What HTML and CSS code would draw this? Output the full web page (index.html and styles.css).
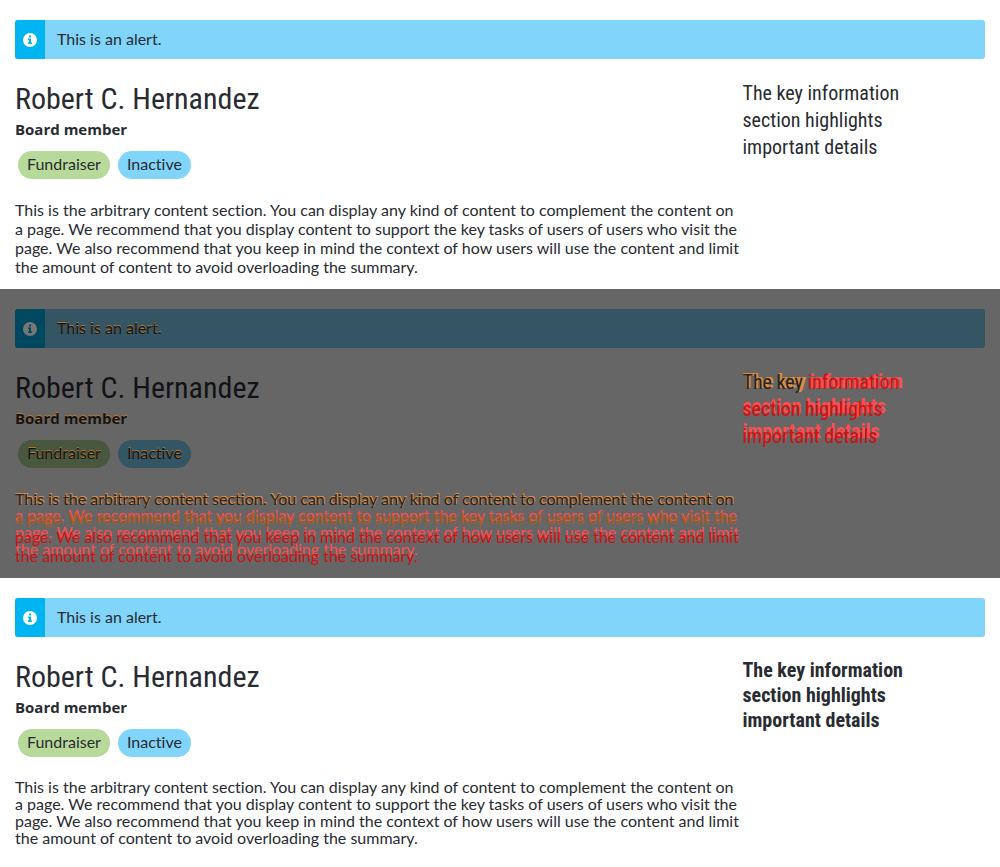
FILE: index.html
```html
<!DOCTYPE html>
<html lang="en">
<head>
<meta charset="utf-8">
<title>Summary comparison</title>
<link rel="stylesheet" href="styles.css">
</head>
<body>
<main>
  <section class="panel">
    <div class="alert" role="alert">
      <span class="alert-icon"><svg viewBox="0 0 14 14" width="14" height="14" aria-hidden="true"><circle cx="7" cy="7" r="7" fill="#fff"/><path d="M6 2.500h2v2H6zM5 5.500h3v4h1V11H5V9.500h1V7H5z" fill="#00b4f1"/></svg></span>
      <p class="alert-text">This is an alert.</p>
    </div>
    <div class="summary">
      <div class="details">
        <h1 class="name">Robert C. Hernandez</h1>
        <p class="role">Board member</p>
        <div class="labels"><span class="label label-green">Fundraiser</span><span class="label label-blue">Inactive</span></div>
        <p class="content">This is the arbitrary content section. You can display any kind of content to complement the content on<br>a page. We recommend that you display content to support the key tasks of users of users who visit the<br>page. We also recommend that you keep in mind the context of how users will use the content and limit<br>the amount of content to avoid overloading the summary.</p>
      </div>
      <aside class="key"><p class="key-text">The key information<br>section highlights<br>important details</p></aside>
    </div>
  </section>

  <section class="panel diff">
    <div class="alert" role="alert">
      <span class="alert-icon"><svg viewBox="0 0 14 14" width="14" height="14" aria-hidden="true"><circle cx="7" cy="7" r="7" fill="#777"/><path d="M6 2.500h2v2H6zM5 5.500h3v4h1V11H5V9.500h1V7H5z" fill="#004860"/></svg></span>
      <p class="alert-text edge">This is an alert.</p>
    </div>
    <div class="summary">
      <div class="details">
        <h1 class="name">Robert C. Hernandez</h1>
        <p class="role edge">Board member</p>
        <div class="labels"><span class="label label-green edge">Fundraiser</span><span class="label label-blue edge">Inactive</span></div>
        <div class="stack">
          <p class="content before"><span class="kept">This is the arbitrary content section. You can display any kind of content to complement the content on</span><br><span class="moved">a page. We recommend that you display content to support the key tasks of users of users who visit the</span><br>page. We also recommend that you keep in mind the context of how users will use the content and limit<br>the amount of content to avoid overloading the summary.</p>
          <p class="content compact after" aria-hidden="true"><span class="kept">This is the arbitrary content section. You can display any kind of content to complement the content on</span><br>a page. We recommend that you display content to support the key tasks of users of users who visit the<br>page. We also recommend that you keep in mind the context of how users will use the content and limit<br>the amount of content to avoid overloading the summary.</p>
        </div>
      </div>
      <aside class="key">
        <div class="stack">
          <p class="key-text before"><span class="kept">The key</span> information<br>section highlights<br>important details</p>
          <p class="key-text strong after" aria-hidden="true"><span class="kept">The key</span> information<br>section highlights<br>important details</p>
        </div>
      </aside>
    </div>
  </section>

  <section class="panel">
    <div class="alert" role="alert">
      <span class="alert-icon"><svg viewBox="0 0 14 14" width="14" height="14" aria-hidden="true"><circle cx="7" cy="7" r="7" fill="#fff"/><path d="M6 2.500h2v2H6zM5 5.500h3v4h1V11H5V9.500h1V7H5z" fill="#00b4f1"/></svg></span>
      <p class="alert-text">This is an alert.</p>
    </div>
    <div class="summary">
      <div class="details">
        <h1 class="name">Robert C. Hernandez</h1>
        <p class="role">Board member</p>
        <div class="labels"><span class="label label-green">Fundraiser</span><span class="label label-blue">Inactive</span></div>
        <p class="content compact">This is the arbitrary content section. You can display any kind of content to complement the content on<br>a page. We recommend that you display content to support the key tasks of users of users who visit the<br>page. We also recommend that you keep in mind the context of how users will use the content and limit<br>the amount of content to avoid overloading the summary.</p>
      </div>
      <aside class="key"><p class="key-text strong">The key information<br>section highlights<br>important details</p></aside>
    </div>
  </section>
</main>
</body>
</html>
```
FILE: styles.css
```css
* { box-sizing: border-box; }
body { margin: 0; background: #fff; color: #282b31; font: 16px/19px Lato, sans-serif; font-variant-ligatures: none; }
h1, p { margin: 0; }
.panel { padding: 20px 15px 11px; min-height: 289px; }
.alert { display: flex; min-height: 39px; background: #81d4fa; border-radius: 3px; overflow: hidden; }
.alert-icon { display: flex; align-items: center; justify-content: center; width: 30px; background: #00b4f1; }
.alert-icon svg { display: block; }
.alert-text { padding: 9px 12px 11px; }
.summary { display: grid; grid-template-columns: 3fr 1fr; padding-top: 21px; }
.details { min-width: 0; }
.name { font: 400 30px/38px "Roboto Condensed", Roboto, sans-serif; }
.role { font: 700 15px/20px "Open Sans", sans-serif; padding-top: 1px; }
.labels { display: flex; gap: 8px; padding: 12px 3px 21px; }
.label { padding: 3px 9px 6px; border-radius: 14px; }
.label-green { background: #b7da9b; }
.label-blue { background: #81d4fa; }
.content { white-space: nowrap; }
.compact { line-height: 17px; }
.key-text { font: 400 20px/27px "Roboto Condensed", Roboto, sans-serif; white-space: nowrap; }
.key-text.strong { font-weight: 700; line-height: 25px; }
.diff { background: #666; color: #111316; }
.diff .alert, .diff .label-blue { background: #335564; }
.diff .alert-icon { background: #004860; }
.diff .label-green { background: #49573e; }
.edge { text-shadow: 0 -1px #b87428; }
.stack { display: grid; }
.stack > * { grid-area: 1 / 1; }
.before { color: #cc1212; z-index: 1; }
.after { color: #ff4d4d; }
.before .kept { color: #222329; }
.before .moved { color: #a85c18; }
.after .kept { color: #e08a3c; text-shadow: 1px 0 #d68b3c; }
```
